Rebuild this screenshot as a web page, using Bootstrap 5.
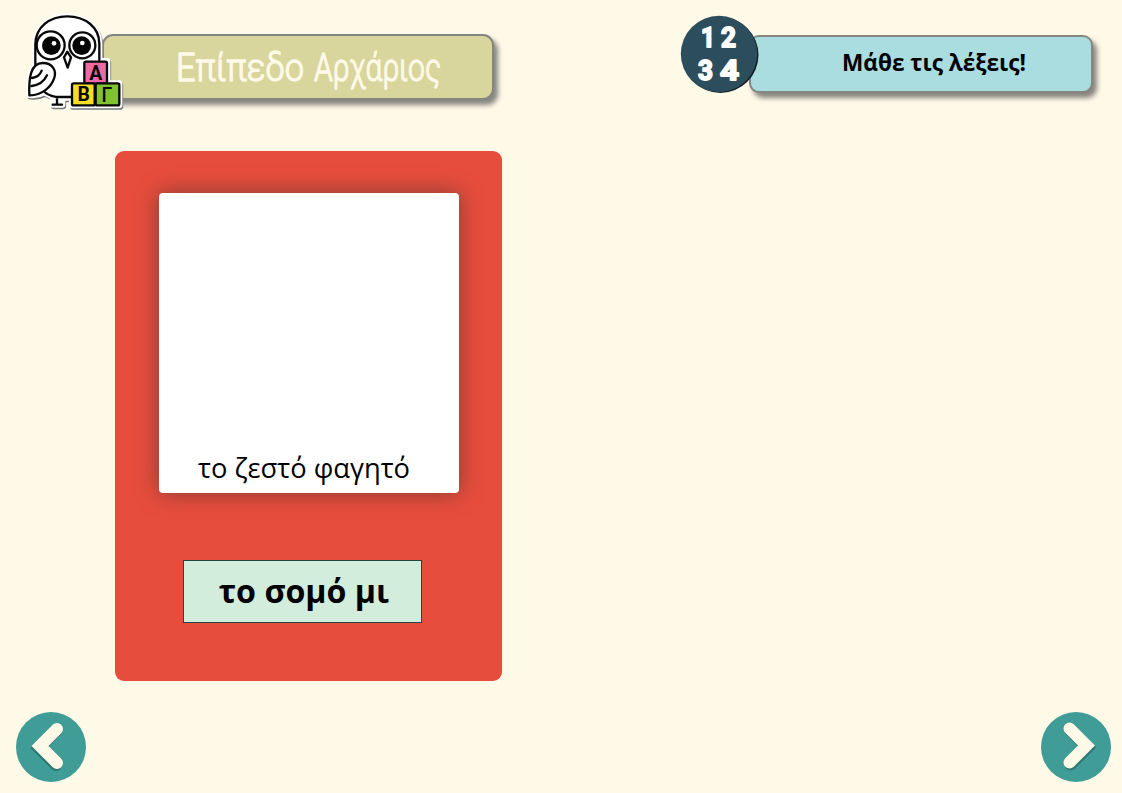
<!DOCTYPE html>
<html lang="el">
<head>
<meta charset="utf-8">
<meta name="viewport" content="width=device-width, initial-scale=1">
<title>Μάθε τις λέξεις!</title>
<link href="https://cdn.jsdelivr.net/npm/bootstrap@5.3.0/dist/css/bootstrap.min.css" rel="stylesheet">
<style>
body{background:#fff9e8;font-family:"Open Sans","Noto Sans",sans-serif;color:#000;overflow:hidden}
svg{display:block;overflow:visible}
.topbar{height:151px}
.banner{border:2px solid #858581;box-shadow:4px 5px 5px rgba(70,70,70,.65)}
.level{width:392px;height:66px;margin:34px 0 0 102px;background:#d8d69d;border-radius:11px}
.task{width:344px;height:58px;margin:35px 29px 0 0;background:#aadde0;border-radius:10px;font-size:22.6px;font-weight:700;padding:0 0 2px 26px}
.owl{left:-94px;top:-31px}
.digits{left:-72px;top:-23px}
.word-card{width:387px;height:530px;margin-left:115px;background:#e74d3c;border-radius:9px;padding-top:42px}
.photo{width:300px;height:300px;border-radius:4px;box-shadow:0 0 22px rgba(50,45,45,.55);font-size:27.3px;line-height:36px;padding:0 9px 7px 0}
.answer{width:239px;height:63px;margin:67px 0 0 68px;background:#d3eddd;border:1.5px solid #24483d;font-size:32.2px;font-weight:700;padding:0 0 1px 3px}
.pager{margin-top:31px;padding:0 11px 0 16px}
</style>
</head>
<body class="vh-100">
<header class="topbar d-flex justify-content-between align-items-start">
  <div class="banner level position-relative">
    <svg width="388" height="62" viewBox="104 36 388 62" font-family="Roboto,sans-serif" font-weight="300" font-size="39" fill="#fff9e8" stroke="#fff9e8" stroke-width="1.3" stroke-linejoin="round">
      <text x="176" y="81" textLength="128" lengthAdjust="spacingAndGlyphs">Επίπεδο</text>
      <text x="314" y="81" textLength="127" lengthAdjust="spacingAndGlyphs">Αρχάριος</text>
    </svg>
    <svg class="owl position-absolute" width="130" height="115" viewBox="0 0 390 345" aria-hidden="true">
      <defs>
        <g id="outline">
          <path d="M76 178V118C76 66 119 34 172 34S268 66 268 116V168H292V235H328V301H186V278H157V299H128V276L104 262Q79 274 58 270C54 230 60 191 78 177Z"/>
        </g>
      </defs>
      <use href="#outline" fill="#75787a" stroke="#75787a" stroke-width="17" stroke-linejoin="round" transform="translate(3 5)"/>
      <use href="#outline" fill="#fff" stroke="#fff" stroke-width="18" stroke-linejoin="round"/>
      <g fill="none" stroke="#090909" stroke-width="7" stroke-linecap="round" stroke-linejoin="round">
        <path d="M76 178V118C76 66 119 34 172 34S268 66 268 116V165M105 262Q122 276 151 276H184M141 277V298M128 299H156"/>
        <circle cx="122" cy="121" r="42" fill="#fff"/><circle cx="217" cy="121" r="39" fill="#fff"/>
        <path d="M172 140L183 157L173 188L162 157Z" fill="#fff"/>
        <path d="M58 271C56 219 62 174 98 174C128 174 141 197 132 221C124 245 96 272 58 271ZM66 219Q88 216 95 197M65 243Q98 239 111 211" fill="#fff"/>
      </g>
      <g fill="#060606"><circle cx="124" cy="122" r="28"/><circle cx="215" cy="122" r="28"/></g>
      <circle cx="132" cy="115" r="7" fill="#fff"/><circle cx="217" cy="114" r="7" fill="#fff"/>
      <g stroke="#090909" stroke-width="7">
        <rect x="223" y="170" width="68" height="66" rx="5" fill="#ef6aa3"/>
        <rect x="186" y="235" width="68" height="66" rx="5" fill="#f8de22"/>
        <rect x="257" y="235" width="71" height="66" rx="5" fill="#83c22f"/>
      </g>
      <g font-family="Roboto,sans-serif" font-weight="700" font-size="58" text-anchor="middle" fill="#080808">
        <text x="257" y="225">Α</text><text x="221" y="288">Β</text><text x="291" y="290" font-weight="500">Γ</text>
      </g>
    </svg>
  </div>
  <div class="banner task position-relative d-flex align-items-center justify-content-center">
    <svg class="digits position-absolute" width="84" height="84" viewBox="679 14 84 84">
      <circle cx="720.5" cy="55" r="38" fill="#111d25"/>
      <circle cx="719" cy="54" r="38.2" fill="#2c4d5c"/>
      <g font-family="Roboto,sans-serif" font-weight="700" font-size="27.500" fill="#fff" stroke="#fff" stroke-width="1.800" stroke-linejoin="round">
        <text x="701" y="46.500" textLength="14" lengthAdjust="spacingAndGlyphs">1</text>
        <text x="721" y="46.500" textLength="15" lengthAdjust="spacingAndGlyphs">2</text>
        <text x="698" y="79.500" textLength="15" lengthAdjust="spacingAndGlyphs">3</text>
        <text x="720" y="79.500" textLength="19" lengthAdjust="spacingAndGlyphs">4</text>
      </g>
    </svg>
    <span>Μάθε τις λέξεις!</span>
  </div>
</header>
<main class="word-card">
  <div class="photo bg-white mx-auto d-flex align-items-end justify-content-center">το ζεστό φαγητό</div>
  <div class="answer d-flex align-items-center justify-content-center">το σομό μι</div>
</main>
<nav class="pager d-flex justify-content-between" aria-label="Πλοήγηση">
  <a href="#" aria-label="Προηγούμενο"><svg width="70" height="70" viewBox="0 0 70 70" fill="none" stroke-width="12" stroke-linecap="round"><circle cx="35" cy="35" r="35" fill="#3f9c96"/><path d="M41 17L24 34L41 51" transform="translate(-1 2)" stroke="#2e7773"/><path d="M41 17L24 34L41 51" stroke="#fff9e8"/></svg></a>
  <a href="#" aria-label="Επόμενο"><svg width="70" height="70" viewBox="0 0 70 70" fill="none" stroke-width="12" stroke-linecap="round"><circle cx="35" cy="35" r="35" fill="#3f9c96"/><path d="M28.500 16.500L45.500 33.500L28.500 50.500" transform="translate(1 2)" stroke="#2e7773"/><path d="M28.500 16.500L45.500 33.500L28.500 50.500" stroke="#fff9e8"/></svg></a>
</nav>
<script src="https://cdn.jsdelivr.net/npm/bootstrap@5.3.0/dist/js/bootstrap.bundle.min.js"></script>
</body>
</html>
